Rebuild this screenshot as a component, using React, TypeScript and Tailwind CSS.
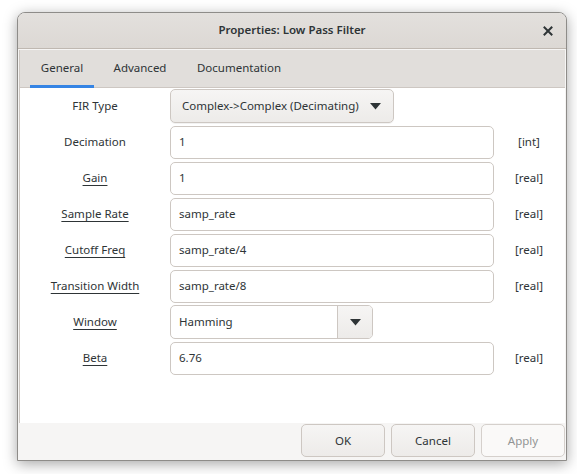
import React from 'react';

type Row = {
  label: string;
  underline?: boolean;
  value: string;
  kind: 'entry' | 'dropdown' | 'combo';
  type?: string;
};

const rows: Row[] = [
  { label: 'FIR Type', value: 'Complex->Complex (Decimating)', kind: 'dropdown' },
  { label: 'Decimation', value: '1', kind: 'entry', type: '[int]' },
  { label: 'Gain', underline: true, value: '1', kind: 'entry', type: '[real]' },
  { label: 'Sample Rate', underline: true, value: 'samp_rate', kind: 'entry', type: '[real]' },
  { label: 'Cutoff Freq', underline: true, value: 'samp_rate/4', kind: 'entry', type: '[real]' },
  { label: 'Transition Width', underline: true, value: 'samp_rate/8', kind: 'entry', type: '[real]' },
  { label: 'Window', underline: true, value: 'Hamming', kind: 'combo' },
  { label: 'Beta', underline: true, value: '6.76', kind: 'entry', type: '[real]' },
];

function Arrow() {
  return (
    <svg width="11" height="7" viewBox="0 0 11 7">
      <polygon points="0,0 11,0 5.5,6.5" fill="#2e3436" />
    </svg>
  );
}

function Field({ row }: { row: Row }) {
  if (row.kind === 'dropdown') {
    return (
      <div className="flex items-center justify-between w-[224px] h-[34px] pl-[11px] pr-[12px] rounded-[5px] border border-[#cdc7c2] bg-gradient-to-b from-[#f6f5f4] to-[#edebe9] shadow-[0_1px_0_rgba(0,0,0,0.05)]">
        <span>{row.value}</span>
        <Arrow />
      </div>
    );
  }

  if (row.kind === 'combo') {
    return (
      <div className="flex w-[203px] h-[34px] rounded-[5px] border border-[#cdc7c2] bg-white overflow-hidden">
        <div className="flex-1 flex items-center pl-[8px]">{row.value}</div>
        <div className="flex items-center justify-center w-[35px] border-l border-[#cdc7c2] bg-gradient-to-b from-[#f6f5f4] to-[#edebe9]">
          <Arrow />
        </div>
      </div>
    );
  }

  return (
    <div className="flex items-center w-[324px] h-[33px] pl-[8px] rounded-[5px] border border-[#cdc7c2] bg-white">
      {row.value}
    </div>
  );
}

export default function App() {
  return (
    <div
      className="w-[577px] h-[474px] bg-white pt-[12px] pl-[17px] text-[#2e3436] text-[11.5px]"
      style={{ fontFamily: '"Noto Sans", "Open Sans", sans-serif' }}
    >
      <div className="flex flex-col w-[550px] h-[449px] rounded-t-[8px] border border-[#8e8c89] bg-[#f6f5f4] shadow-[0_3px_14px_rgba(0,0,0,0.35)] overflow-hidden">
        <div className="relative flex items-center justify-center h-[36px] pb-[1px] shrink-0 border-b border-[#bfb8b1] bg-gradient-to-b from-[#e3e0dd] to-[#dcd8d4]">
          <span className="font-semibold text-[11.5px]">Properties: Low Pass Filter</span>
          <svg className="absolute right-[13px] top-[13px]" width="10" height="10" viewBox="0 0 10 10">
            <path d="M1.5 1.5 L8.5 8.5 M8.5 1.5 L1.5 8.5" stroke="#2e3436" strokeWidth="2" strokeLinecap="square" />
          </svg>
        </div>

        <div className="flex flex-col mt-[1px] ml-[1px] mr-[1px] border-l border-[#cdc7c2] bg-white">
          <div className="flex items-end h-[38px] px-[10px] bg-[#e1dedb] border-b border-[#cdc7c2]">
            <div className="flex items-center justify-center w-[64px] h-[37px] pb-[1px] border-b-[3px] border-[#3584e4] mb-[-1px]">
              General
            </div>
            <div className="flex items-center justify-center w-[92px] h-[37px] pb-[4px] mb-[-1px]">Advanced</div>
            <div className="flex items-center justify-center w-[106px] h-[37px] pb-[4px] mb-[-1px]">Documentation</div>
          </div>

          <div className="flex flex-col h-[335px]">
            {rows.map((row) => (
              <div key={row.label} className="flex items-center h-[36px]">
                <div className="w-[150px] text-center">
                  <span className={row.underline ? 'underline underline-offset-[3px]' : ''}>{row.label}</span>
                </div>
                <div className="w-[324px]">
                  <Field row={row} />
                </div>
                <div className="w-[70px] text-center">{row.type}</div>
              </div>
            ))}
          </div>
        </div>

        <div className="flex justify-end gap-[6px] pt-[1px] pr-[1px] flex-1">
          <button className="w-[84px] h-[33px] rounded-[5px] border border-[#cdc7c2] bg-gradient-to-b from-[#f6f5f4] to-[#edebe9]">
            OK
          </button>
          <button className="w-[84px] h-[33px] rounded-[5px] border border-[#cdc7c2] bg-gradient-to-b from-[#f6f5f4] to-[#edebe9]">
            Cancel
          </button>
          <button className="w-[84px] h-[33px] rounded-[5px] border border-[#d5d0cc] bg-[#faf9f8] text-[#929595]">
            Apply
          </button>
        </div>
      </div>
    </div>
  );
}
